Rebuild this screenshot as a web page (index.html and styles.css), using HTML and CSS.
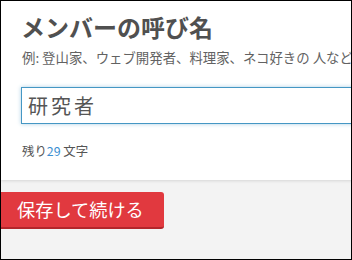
FILE: index.html
```html
<!DOCTYPE html>
<html lang="ja">
<head>
<meta charset="utf-8">
<link rel="stylesheet" href="styles.css">
</head>
<body>
<div class="frame">
  <section class="panel">
    <h1 class="title">メンバーの呼び名</h1>
    <p class="hint">例: 登山家、ウェブ開発者、料理家、ネコ好きの 人など</p>
    <div class="field">研究者</div>
    <p class="counter">残り<span class="num">29</span> 文字</p>
  </section>
  <div class="actions">
    <button class="btn">保存して続ける</button>
  </div>
</div>
</body>
</html>
```
FILE: styles.css
```css
html, body {
  margin: 0;
  padding: 0;
}
body {
  font-family: "Noto Sans CJK JP", "Noto Sans", sans-serif;
}
.frame {
  width: 352px;
  height: 260px;
  box-sizing: border-box;
  border: 1px solid #000;
  background: #f3f3f3;
  overflow: hidden;
}
.panel {
  background: #fff;
  padding: 11px 0 21px 20px;
  width: 500px;
  box-shadow: 0 1px 3px rgba(0, 0, 0, 0.12);
  position: relative;
}
.title {
  margin: 0;
  font-size: 24px;
  line-height: 30px;
  font-weight: bold;
  color: #505050;
  white-space: nowrap;
}
.hint {
  margin: 6px 0 0 1px;
  font-size: 13.4px;
  line-height: 18px;
  color: #626262;
  white-space: nowrap;
}
.field {
  margin-top: 21px;
  width: 420px;
  height: 35px;
  box-sizing: content-box;
  border: 1px solid #4597c4;
  box-shadow: 0 0 4px rgba(69, 151, 196, 0.45);
  padding: 0 0 0 6px;
  font-size: 20px;
  line-height: 35px;
  letter-spacing: 3px;
  color: #555;
}
.counter {
  margin: 19px 0 0 1px;
  font-size: 12.4px;
  line-height: 16px;
  color: #555;
}
.num {
  color: #3b8fd1;
}
.actions {
  padding-top: 12px;
}
.btn {
  display: block;
  margin-left: -4px;
  height: 37px;
  padding: 0 20px 0 20px;
  border: 0;
  border-bottom: 2px solid #b3262b;
  border-radius: 3px;
  background: #e1393f;
  color: #fff;
  font-family: "Noto Sans CJK JP", "Noto Sans", sans-serif;
  font-size: 18.2px;
  line-height: 35px;
}
```
